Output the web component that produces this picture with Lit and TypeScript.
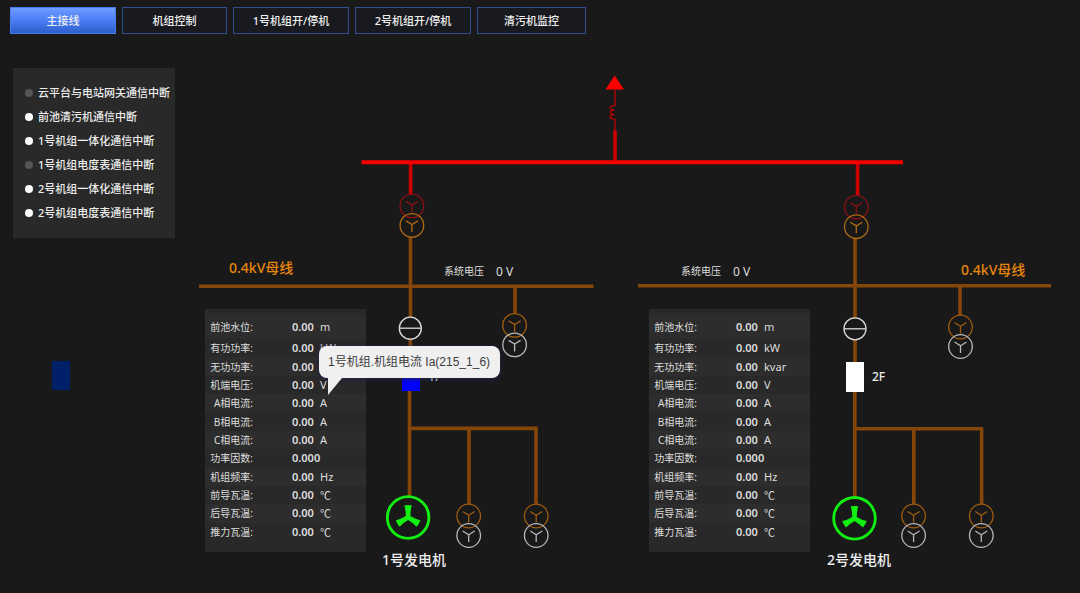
import { LitElement, html, svg, css } from "lit";
import { customElement, property, state } from "lit/decorators.js";
import { classMap } from "lit/directives/class-map.js";
import { styleMap } from "lit/directives/style-map.js";

// Drawing area of the single-line diagram, in diagram units.
const VIEW = { x: 190, y: 40, width: 890, height: 553 };

const place = (x: number, y: number) => ({
  left: `${((x - VIEW.x) / VIEW.width) * 100}%`,
  top: `${((y - VIEW.y) / VIEW.height) * 100}%`,
});

const TABS = ["主接线", "机组控制", "1号机组开/停机", "2号机组开/停机", "清污机监控"];

const ALARMS = [
  { text: "云平台与电站网关通信中断", on: false },
  { text: "前池清污机通信中断", on: true },
  { text: "1号机组一体化通信中断", on: true },
  { text: "1号机组电度表通信中断", on: false },
  { text: "2号机组一体化通信中断", on: true },
  { text: "2号机组电度表通信中断", on: true },
];

const READINGS: [string, string, string][] = [
  ["前池水位", "0.00", "m"],
  ["有功功率", "0.00", "kW"],
  ["无功功率", "0.00", "kvar"],
  ["机端电压", "0.00", "V"],
  ["A相电流", "0.00", "A"],
  ["B相电流", "0.00", "A"],
  ["C相电流", "0.00", "A"],
  ["功率因数", "0.000", ""],
  ["机组频率", "0.00", "Hz"],
  ["前导瓦温", "0.00", "℃"],
  ["后导瓦温", "0.00", "℃"],
  ["推力瓦温", "0.00", "℃"],
];

@customElement("reading-panel")
class ReadingPanel extends LitElement {
  @property() label = "";

  static styles = css`
    :host {
      display: block;
      width: 161px;
      padding: 6px 0 11px;
      box-sizing: border-box;
      background: #292929;
    }
    .readings {
      width: 100%;
      height: 226px;
      table-layout: fixed;
      border-collapse: collapse;
      color: #dedede;
      font-size: 11px;
      line-height: 16px;
      white-space: nowrap;
    }
    .first {
      height: 24px;
    }
    .readings tr:nth-child(odd) {
      background: #2d2d2d;
    }
    .name,
    .value,
    .unit {
      padding: 0;
      text-align: left;
    }
    .name {
      width: 48px;
      text-align: right;
      font-size: 10px;
      font-weight: 400;
    }
    .value {
      width: 28px;
      padding-left: 39px;
      font-weight: 600;
    }
    .degree {
      font-family: "Noto Sans CJK SC", sans-serif;
    }
  `;

  render() {
    return html`
      <table class="readings" aria-label=${this.label}>
        <tbody>
          ${READINGS.map(
            ([name, value, unit], i) => html`
              <tr class=${classMap({ first: i === 0 })}>
                <th class="name" scope="row">${name}:</th>
                <td class="value">${value}</td>
                <td class=${classMap({ unit: true, degree: unit === "℃" })}>${unit}</td>
              </tr>
            `
          )}
        </tbody>
      </table>
    `;
  }
}

const star = (x: number, y: number, kind: string) => svg`
  <g class=${kind} transform="translate(${x} ${y})">
    <circle r="11.8" />
    <path d="M-6 -4.5 L0 -0.8 L6 -4.5 M0 -0.8 V6.5" />
  </g>`;

const transformer = (x: number, y: number, top: string, bottom: string) => svg`
  ${star(x, y, top)}
  ${star(x, y + 19.5, bottom)}`;

const isolator = (x: number, y: number) => svg`
  <g class="isolator" transform="translate(${x} ${y})">
    <circle r="11" />
    <path d="M-11 0 H11" />
  </g>`;

const generator = (x: number, y: number) => svg`
  <g transform="translate(${x} ${y})">
    <circle class="gen-ring" r="20.8" />
    ${[0, 120, 240].map(
      (a) => svg`<path class="gen-blade" transform="rotate(${a})"
        d="M-3.8 -12 Q0 -12.8 3.8 -12 Q2.2 -7 2.3 -1.2 L0 1.5 L-2.3 -1.2 Q-2.2 -7 -3.8 -12Z" />`
    )}
  </g>`;

@customElement("app-root")
class AppRoot extends LitElement {
  @state() private tab = 0;

  static styles = css`
    :host {
      display: block;
      min-height: 100vh;
      background: #191919;
      color: #ededed;
      font-family: "Noto Sans", "Noto Sans CJK SC", sans-serif;
      font-size: 11px;
    }
    .tabs {
      display: grid;
      grid-template-columns: 106px 105px 116px 116px 109px;
      gap: 6px;
      padding: 7px 10px 6px;
    }
    .tab {
      height: 27px;
      padding: 0;
      border: 1px solid #2f4f8f;
      background: #191a1f;
      color: #f0f0f0;
      font: inherit;
      font-weight: 500;
      line-height: 23px;
      cursor: pointer;
    }
    .tab.active {
      border-color: #4a7be8;
      background: linear-gradient(#6f9cff, #4a7df5 50%, #2f5fca);
    }
    .body {
      display: grid;
      grid-template-columns: 190px 1fr;
      align-items: start;
    }
    .side {
      padding: 28px 15px 0 13px;
    }
    .alarms {
      margin: 0;
      padding: 13px 0 13px 12px;
      list-style: none;
      background: #292929;
    }
    .alarm {
      display: flex;
      align-items: center;
      gap: 5px;
      height: 24px;
      font-weight: 500;
      line-height: 24px;
      white-space: nowrap;
    }
    .lamp {
      width: 8px;
      height: 8px;
      border-radius: 50%;
      background: #555;
    }
    .lamp.on {
      background: #fff;
    }
    .gate {
      width: 18px;
      height: 29px;
      margin: 123px 0 0 39px;
      background: #00206a;
    }
    .stage {
      position: relative;
    }
    .diagram {
      display: block;
      width: 100%;
    }
    .diagram path,
    .diagram circle {
      fill: none;
      stroke-width: 1.3;
    }
    .diagram .hv-bus {
      stroke: #f60000;
      stroke-width: 4;
    }
    .diagram .hv-drop {
      stroke: #cc0000;
      stroke-width: 3.6;
    }
    .diagram .hv-thin {
      stroke: #c80000;
      stroke-width: 1.2;
    }
    .diagram .arrow {
      fill: #ff0000;
    }
    .diagram .lv {
      stroke: #854609;
      stroke-width: 3.6;
    }
    .red {
      stroke: #8a1014;
    }
    .amber {
      stroke: #b06c14;
    }
    .brown {
      stroke: #a05c10;
    }
    .white {
      stroke: #b8b8b8;
    }
    .isolator {
      stroke: #dcdcdc;
    }
    .diagram .gen-ring {
      stroke: #12f012;
      stroke-width: 2.8;
    }
    .diagram .gen-blade {
      fill: #12f012;
    }
    .breaker-blue {
      fill: #0000ff;
    }
    .breaker-white {
      fill: #ffffff;
    }
    .t-bus {
      fill: #e8860c;
      font-size: 14px;
      font-weight: 500;
    }
    .t-gen {
      fill: #ededed;
      font-size: 14px;
      font-weight: 500;
    }
    .t-name {
      fill: #dedede;
      font-size: 10px;
    }
    .t-value {
      fill: #dedede;
      font-size: 12px;
    }
    .t-breaker {
      fill: #ededed;
      font-size: 12px;
      font-weight: 500;
    }
    .panel {
      position: absolute;
    }
    .tip {
      position: absolute;
      padding: 0 10px 0 9px;
      border-radius: 8px;
      background: #f0f0f0;
      box-shadow: 0 1px 5px #23234f;
      color: #3c3c3c;
      font-family: "Liberation Sans", "Noto Sans CJK SC", sans-serif;
      font-size: 12px;
      line-height: 32px;
      white-space: nowrap;
    }
    .tip::after {
      content: "";
      position: absolute;
      top: 100%;
      left: 9px;
      width: 14px;
      height: 17px;
      background: #f0f0f0;
      clip-path: polygon(0 0, 100% 0, 0 100%);
    }
  `;

  render() {
    return html`
      <nav class="tabs">
        ${TABS.map(
          (name, i) => html`
            <button
              type="button"
              class=${classMap({ tab: true, active: i === this.tab })}
              @click=${() => (this.tab = i)}
            >${name}</button>
          `
        )}
      </nav>
      <main class="body">
        <aside class="side">
          <ul class="alarms">
            ${ALARMS.map(
              (a) => html`
                <li class="alarm">
                  <span class=${classMap({ lamp: true, on: a.on })}></span>${a.text}
                </li>
              `
            )}
          </ul>
          <div class="gate"></div>
        </aside>
        <section class="stage">
          <svg class="diagram" viewBox="${VIEW.x} ${VIEW.y} ${VIEW.width} ${VIEW.height}">
            <path class="arrow" d="M614.7 75.5 L624 89.5 H605.5Z" />
            <path
              class="hv-thin"
              d="M615 89 V105.5 H613.5 C609 105.5 609 110 614.5 110 C609 110 609 114.4 614.5 114.4 C609 114.4 609 119 613.5 119 H615 V131"
            />
            <path class="hv-drop" d="M615 130.5 V161 M410.6 164 V194 M857.6 164 V196" />
            <path class="hv-bus" d="M361.5 162.3 H903" />

            <path
              class="lv"
              d="M199 286.3 H593.5 M410.5 237.5 V317 M410.3 339 V365 M409.5 390 V497 M515 286 V313.5
                 M409 428.4 H537.7 M469 428 V504 M536 428 V504"
            />
            <path
              class="lv"
              d="M638 285.7 H1051 M855 238.5 V318 M855 340 V363 M854.8 391 V497 M960 286 V315
                 M855 428.8 H983 M913.8 428 V504 M981.6 428 V504"
            />

            ${transformer(411.9, 205.9, "red", "amber")}
            ${transformer(856.3, 207.2, "red", "amber")}
            ${transformer(514.6, 325.4, "brown", "white")}
            ${transformer(468.7, 516, "brown", "white")}
            ${transformer(536.2, 516, "brown", "white")}
            ${transformer(960.5, 327, "brown", "white")}
            ${transformer(913.6, 516, "brown", "white")}
            ${transformer(981.3, 516, "brown", "white")}
            ${isolator(410.3, 328.2)} ${isolator(855, 328.8)}
            <rect class="breaker-blue" x="402" y="362" width="18" height="29" />
            <rect class="breaker-white" x="846" y="362" width="18" height="30" />
            ${generator(408.1, 517.5)} ${generator(854.5, 518.3)}

            <text class="t-bus" x="229" y="273">0.4kV母线</text>
            <text class="t-bus" x="961" y="275">0.4kV母线</text>
            <text class="t-name" x="444" y="275">系统电压</text>
            <text class="t-value" x="496" y="276">0 V</text>
            <text class="t-name" x="681" y="275">系统电压</text>
            <text class="t-value" x="733" y="276">0 V</text>
            <text class="t-breaker" x="428" y="381">1F</text>
            <text class="t-breaker" x="872" y="381">2F</text>
            <text class="t-gen" x="382" y="565">1号发电机</text>
            <text class="t-gen" x="827" y="565">2号发电机</text>
          </svg>
          <reading-panel class="panel" label="1号机组" style=${styleMap(place(205, 309))}></reading-panel>
          <reading-panel class="panel" label="2号机组" style=${styleMap(place(649, 309))}></reading-panel>
          <div class="tip" role="tooltip" style=${styleMap(place(319, 346))}>1号机组.机组电流 Ia(215_1_6)</div>
        </section>
      </main>
    `;
  }
}
